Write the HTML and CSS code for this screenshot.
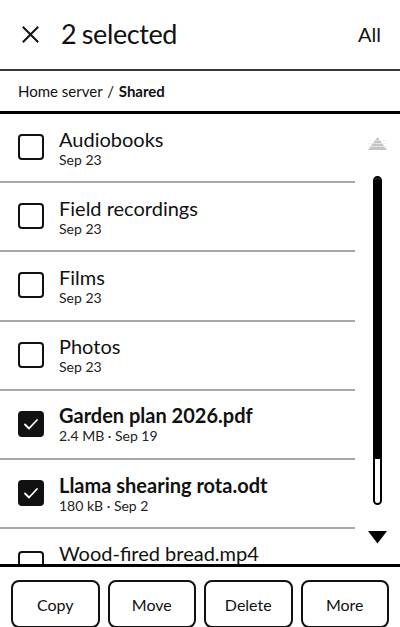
FILE: index.html
```html
<!DOCTYPE html>
<html lang="en">
<head>
<meta charset="utf-8">
<title>2 selected</title>
<link rel="stylesheet" href="styles.css">
</head>
<body>
<div class="screen">
  <header class="topbar">
    <svg class="close" viewBox="0 0 17 17" width="17" height="17" aria-hidden="true">
      <path d="M1.5 1.5 L15.5 15.5 M15.5 1.5 L1.5 15.5" stroke="#111" stroke-width="2" fill="none" stroke-linecap="square"/>
    </svg>
    <h1 class="title">2 selected</h1>
    <span class="all">All</span>
  </header>
  <nav class="crumbs">Home server <span class="sep">/</span> <b>Shared</b></nav>
  <div class="body">
    <ul class="list">
      <li class="row">
        <span class="box"></span>
        <div class="text"><div class="name">Audiobooks</div><div class="meta">Sep 23</div></div>
      </li>
      <li class="row">
        <span class="box"></span>
        <div class="text"><div class="name">Field recordings</div><div class="meta">Sep 23</div></div>
      </li>
      <li class="row">
        <span class="box"></span>
        <div class="text"><div class="name">Films</div><div class="meta">Sep 23</div></div>
      </li>
      <li class="row">
        <span class="box"></span>
        <div class="text"><div class="name">Photos</div><div class="meta">Sep 23</div></div>
      </li>
      <li class="row selected">
        <span class="box checked"><svg viewBox="0 0 26 26" width="26" height="26" aria-hidden="true"><path d="M7 13.5 L11 17.5 L19 9" stroke="#fff" stroke-width="1.8" fill="none" stroke-linecap="round" stroke-linejoin="round"/></svg></span>
        <div class="text"><div class="name">Garden plan 2026.pdf</div><div class="meta">2.4 MB · Sep 19</div></div>
      </li>
      <li class="row selected">
        <span class="box checked"><svg viewBox="0 0 26 26" width="26" height="26" aria-hidden="true"><path d="M7 13.5 L11 17.5 L19 9" stroke="#fff" stroke-width="1.8" fill="none" stroke-linecap="round" stroke-linejoin="round"/></svg></span>
        <div class="text"><div class="name">Llama shearing rota.odt</div><div class="meta">180 kB · Sep 2</div></div>
      </li>
      <li class="row last">
        <span class="box"></span>
        <div class="text"><div class="name">Wood-fired bread.mp4</div></div>
      </li>
    </ul>
    <div class="scroller">
      <svg class="arrow" viewBox="0 0 19 13" width="19" height="13" aria-hidden="true">
        <polygon points="9.5,0 19,13 0,13" fill="#c4c4c4"/>
        <path d="M0 3.5 H19 M0 6.5 H19 M0 9.5 H19" stroke="#eee" stroke-width="0.8"/>
      </svg>
      <div class="track"><div class="thumb"></div></div>
      <svg class="arrow" viewBox="0 0 19 13" width="19" height="13" aria-hidden="true">
        <polygon points="0,0 19,0 9.5,12.5" fill="#000"/>
      </svg>
    </div>
  </div>
  <footer class="actions">
    <button class="btn">Copy</button>
    <button class="btn">Move</button>
    <button class="btn">Delete</button>
    <button class="btn">More</button>
  </footer>
</div>
</body>
</html>
```

FILE: styles.css
```css
* { box-sizing: border-box; }
html, body { margin: 0; padding: 0; background: #fff; }
body {
  font-family: Lato, "Noto Sans", sans-serif;
  color: #111;
  width: 400px;
  height: 627px;
  overflow: hidden;
}
.screen { display: flex; flex-direction: column; height: 627px; }

.topbar {
  height: 71px;
  flex: none;
  display: flex;
  align-items: center;
  padding: 0 19px 2px 22px;
  border-bottom: 2px solid #3a3a3a;
}
.close { flex: none; margin-top: 1px; }
.title {
  margin: 0 0 0 22px;
  font-size: 27px;
  font-weight: 400;
  flex: 1;
  line-height: 34px;
  letter-spacing: -0.4px;
  word-spacing: -1px;
}
.all { font-size: 20px; }

.crumbs {
  height: 43px;
  flex: none;
  padding: 11px 0 0 18px;
  font-size: 15px;
  line-height: 18px;
  border-bottom: 3px solid #000;
  white-space: nowrap;
}
.crumbs .sep { margin: 0 1px; }
.crumbs b { font-weight: 700; }

.body {
  height: 453px;
  flex: none;
  display: flex;
  overflow: hidden;
  border-bottom: 3px solid #000;
}
.list {
  list-style: none;
  margin: 0;
  padding: 0;
  width: 355px;
  flex: none;
}
.row {
  height: 69.2px;
  display: flex;
  align-items: center;
  gap: 15px;
  padding: 0 0 1px 18px;
  border-bottom: 2px solid #a8a8a8;
}
.row.last {
  align-items: flex-start;
  padding-top: 12px;
  border-bottom: none;
}
.row.last .box { margin-top: 10px; }
.box {
  width: 26px;
  height: 26px;
  flex: none;
  border: 2px solid #111;
  border-radius: 4px;
  display: block;
  position: relative;
}
.box.checked { background: #111; }
.box.checked svg { position: absolute; left: -2px; top: -2px; }
.text { display: flex; flex-direction: column; }
.name { font-size: 20px; line-height: 24px; }
.meta { font-size: 14px; line-height: 17px; color: #222; }
.selected .name { font-weight: 700; }

.scroller {
  flex: 1;
  display: flex;
  flex-direction: column;
  align-items: center;
  padding-top: 23px;
}
.track {
  margin: 26px 0 26px;
  width: 9px;
  height: 329px;
  border: 2px solid #000;
  border-radius: 5px;
  overflow: hidden;
}
.thumb { height: 281px; background: #000; }

.actions {
  flex: 1;
  display: flex;
  gap: 8px;
  padding: 13px 11px 0;
}
.btn {
  flex: 1;
  height: 48px;
  background: #fff;
  border: 2px solid #111;
  border-radius: 8px;
  font-family: Lato, "Noto Sans", sans-serif;
  font-size: 16px;
  color: #111;
  padding: 0;
}
```
